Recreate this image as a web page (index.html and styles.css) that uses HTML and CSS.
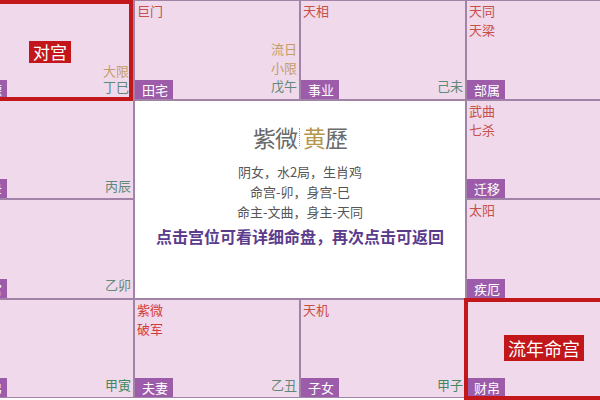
FILE: index.html
```html
<!DOCTYPE html>
<html lang="zh-CN">
<head>
<meta charset="utf-8">
<title>紫微斗数命盘</title>
<link rel="stylesheet" href="styles.css">
</head>
<body>
<div class="board">
  <div class="cell hl hl-a">
    <div class="stars"></div>
    <div class="foot">
      <span class="palace">福德</span>
      <div class="side side-a"><span class="tan">大限</span><span class="gz">丁巳</span></div>
    </div>
    <span class="badge badge-a">对宫</span>
  </div>
  <div class="cell">
    <div class="stars"><span>巨门</span></div>
    <div class="foot">
      <span class="palace">田宅</span>
      <div class="side"><span class="tan">流日</span><span class="tan">小限</span><span class="gz">戊午</span></div>
    </div>
  </div>
  <div class="cell">
    <div class="stars"><span>天相</span></div>
    <div class="foot">
      <span class="palace">事业</span>
      <div class="side"><span class="gz">己未</span></div>
    </div>
  </div>
  <div class="cell">
    <div class="stars"><span>天同</span><span>天梁</span></div>
    <div class="foot">
      <span class="palace">部属</span>
    </div>
  </div>

  <div class="cell">
    <div class="stars"></div>
    <div class="foot">
      <span class="palace">父母</span>
      <div class="side"><span class="gz">丙辰</span></div>
    </div>
  </div>
  <div class="center">
    <div class="logo"><span class="logo-a">紫微</span><span class="logo-sep"></span><span class="logo-b">黄</span><span class="logo-a">歷</span></div>
    <p class="info">阴女，水2局，生肖鸡</p>
    <p class="info">命宫-卯，身宫-巳</p>
    <p class="info">命主-文曲，身主-天同</p>
    <p class="hint">点击宫位可看详细命盘，再次点击可返回</p>
  </div>
  <div class="cell">
    <div class="stars"><span>武曲</span><span>七杀</span></div>
    <div class="foot">
      <span class="palace">迁移</span>
    </div>
  </div>

  <div class="cell">
    <div class="stars"></div>
    <div class="foot">
      <span class="palace">命宫</span>
      <div class="side"><span class="gz">乙卯</span></div>
    </div>
  </div>
  <div class="cell">
    <div class="stars"><span>太阳</span></div>
    <div class="foot">
      <span class="palace">疾厄</span>
    </div>
  </div>

  <div class="cell">
    <div class="stars"></div>
    <div class="foot">
      <span class="palace">兄弟</span>
      <div class="side"><span class="gz green">甲寅</span></div>
    </div>
  </div>
  <div class="cell">
    <div class="stars red"><span>紫微</span><span>破军</span></div>
    <div class="foot">
      <span class="palace">夫妻</span>
      <div class="side"><span class="gz">乙丑</span></div>
    </div>
  </div>
  <div class="cell">
    <div class="stars"><span>天机</span></div>
    <div class="foot">
      <span class="palace">子女</span>
      <div class="side"><span class="gz green">甲子</span></div>
    </div>
  </div>
  <div class="cell hl hl-b">
    <div class="stars"></div>
    <div class="foot">
      <span class="palace">财帛</span>
    </div>
    <span class="badge badge-b">流年命宫</span>
  </div>
</div>
</body>
</html>
```

FILE: styles.css
```css
* { box-sizing: border-box; }

html, body {
  margin: 0;
  padding: 0;
  width: 600px;
  height: 400px;
  overflow: hidden;
  background: #ffffff;
  font-family: "Noto Sans CJK SC", "Noto Sans", sans-serif;
}

.board {
  display: grid;
  grid-template-columns: repeat(4, 164px);
  grid-template-rows: repeat(4, 97.5px);
  gap: 2px;
  padding: 1px;
  width: 664px;
  margin-left: -32px;
  background: #a283a8;
}

.cell {
  position: relative;
  display: flex;
  flex-direction: column;
  justify-content: space-between;
  background: #f1d9ec;
  font-size: 13px;
}

.stars {
  display: flex;
  flex-direction: column;
  align-items: flex-start;
  padding: 0 2px;
  line-height: 19px;
  color: #c65048;
}

.stars.red { color: #d23a3a; }

.foot {
  display: flex;
  justify-content: space-between;
  align-items: flex-end;
}

.palace {
  display: block;
  background: #9d5ca9;
  color: #ffffff;
  line-height: 19px;
  padding: 0 5px 0 7px;
}

.side {
  display: flex;
  flex-direction: column;
  align-items: flex-end;
  line-height: 18.5px;
  padding: 0 2px 3px 0;
}

.side-a {
  line-height: 16px;
  padding: 0 4px 4px 0;
}

.tan { color: #c49e68; }
.gz { color: #5f8a78; }
.gz.green { color: #3f8a5e; }

.hl::after {
  content: "";
  position: absolute;
  border: 4px solid #c2181c;
  z-index: 2;
  pointer-events: none;
}

.hl-a::after { top: -1px; bottom: -2px; left: -2px; right: 0; }
.hl-b::after { top: -2px; bottom: -3px; left: -3px; right: -2px; }

.badge {
  position: absolute;
  top: 50%;
  left: 50%;
  transform: translate(-50%, -50%);
  background: #c2161b;
  color: #ffffff;
  padding: 0 4px;
  z-index: 3;
  white-space: nowrap;
}

.badge-a {
  font-size: 17px;
  line-height: 22px;
  margin-top: 2px;
  margin-left: -1px;
}

.badge-b {
  font-size: 18px;
  line-height: 26px;
  margin-left: -5px;
}

.center {
  grid-column: 2 / span 2;
  grid-row: 2 / span 2;
  background: #ffffff;
  display: flex;
  flex-direction: column;
  align-items: center;
  padding-top: 21px;
}

.logo {
  display: flex;
  align-items: center;
  font-size: 23px;
  line-height: 30px;
  letter-spacing: -1px;
  margin-bottom: 10px;
}

.logo-a { color: #6a6a6a; }
.logo-b { color: #b4974c; }

.logo-sep {
  display: block;
  width: 0;
  height: 18px;
  border-left: 1px dotted #9a9a9a;
  margin: 0 3px 0 2px;
}

.info {
  margin: 0;
  font-size: 13px;
  line-height: 20px;
  color: #555555;
}

.hint {
  margin: 2px 0 0;
  font-size: 16px;
  line-height: 24px;
  font-weight: bold;
  color: #5b3c8c;
}
```
